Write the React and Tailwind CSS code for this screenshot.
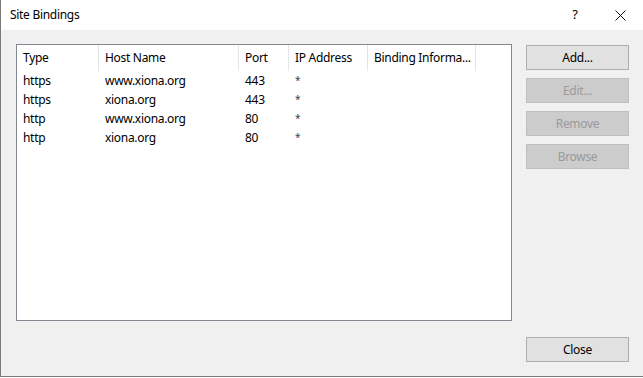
import React from 'react';

const rows = [
  { type: 'https', host: 'www.xiona.org', port: '443', ip: '*' },
  { type: 'https', host: 'xiona.org', port: '443', ip: '*' },
  { type: 'http', host: 'www.xiona.org', port: '80', ip: '*' },
  { type: 'http', host: 'xiona.org', port: '80', ip: '*' },
];

const headers = ['Type', 'Host Name', 'Port', 'IP Address', 'Binding Informa...'];

const DialogButton = ({ children, disabled }) => (
  <button
    disabled={disabled}
    className={
      disabled
        ? 'w-[103px] h-[25px] bg-[#cccccc] border border-[#bfbfbf] text-[#9a9a9a] text-[12px] leading-none'
        : 'w-[103px] h-[25px] bg-[#e1e1e1] border border-[#adadad] text-black text-[12px] leading-none'
    }
  >
    {children}
  </button>
);

const App = () => {
  return (
    <div className="w-[643px] h-[378px] bg-white font-['Noto_Sans',_'Open_Sans',_sans-serif] tracking-[-0.3px] text-black">
      <div className="h-[377px] flex flex-col border-l border-b border-[#7a7a7a]">
        <div className="h-[30px] bg-white flex items-center justify-between pl-[9px]">
          <span className="text-[12px]">Site Bindings</span>
          <div className="flex items-center h-full">
            <span className="w-[30px] text-center text-[13px] mr-[7px]">?</span>
            <div className="w-[46px] h-full flex items-center justify-center">
              <svg width="11" height="11" viewBox="0 0 11 11" stroke="#111" strokeWidth="1" fill="none">
                <path d="M0.5 0.5 L10.5 10.5 M10.5 0.5 L0.5 10.5" />
              </svg>
            </div>
          </div>
        </div>

        <div className="flex-1 bg-[#f0f0f0] pt-[14px] pl-[15px] pr-[14px] pb-[13px] flex flex-col">
          <div className="flex gap-[14px]">
            <div className="w-[496px] h-[277px] bg-white border border-[#828790] text-[12px]">
              <div className="grid grid-cols-[82px_140px_50px_79px_108px] h-[26px]">
                {headers.map((h) => (
                  <div key={h} className="border-r border-[#e5e5e5] pl-[6px] flex items-center whitespace-nowrap overflow-hidden">
                    {h}
                  </div>
                ))}
              </div>
              {rows.map((r, i) => (
                <div key={i} className="grid grid-cols-[82px_140px_50px_79px_108px] h-[19px] items-center">
                  <div className="pl-[6px]">{r.type}</div>
                  <div className="pl-[6px]">{r.host}</div>
                  <div className="pl-[6px]">{r.port}</div>
                  <div className="pl-[6px] text-[10px] text-[#444]">{r.ip}</div>
                  <div></div>
                </div>
              ))}
            </div>
            <div className="flex flex-col gap-[8px] pt-[1px]">
              <DialogButton>Add...</DialogButton>
              <DialogButton disabled>Edit...</DialogButton>
              <DialogButton disabled>Remove</DialogButton>
              <DialogButton disabled>Browse</DialogButton>
            </div>
          </div>
          <div className="flex justify-end mt-[16px]">
            <DialogButton>Close</DialogButton>
          </div>
        </div>
      </div>
    </div>
  );
};

export default App;
